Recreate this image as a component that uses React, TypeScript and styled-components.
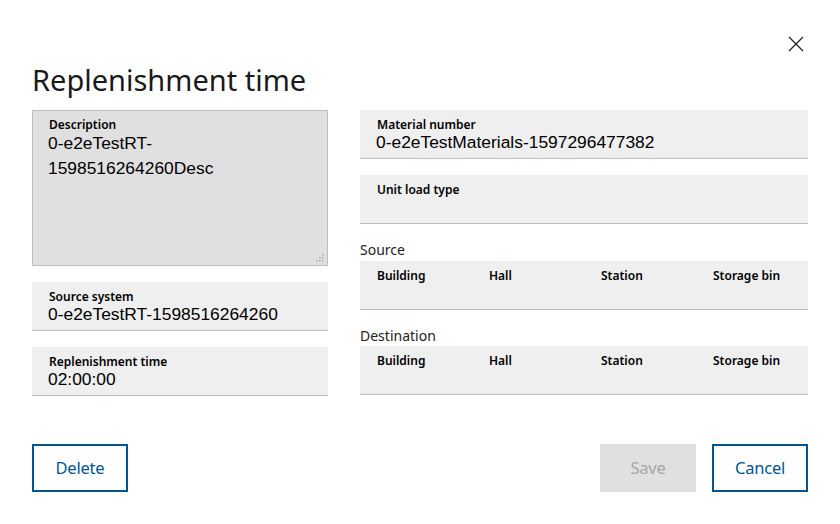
import React from "react";
import styled, { createGlobalStyle } from "styled-components";

const GlobalStyle = createGlobalStyle`
  html, body {
    margin: 0;
    padding: 0;
    background: #ffffff;
  }
  * { box-sizing: border-box; }
`;

const Dialog = styled.div`
  width: 840px;
  height: 524px;
  padding: 32px;
  display: flex;
  flex-direction: column;
  font-family: "Noto Sans", "Liberation Sans", sans-serif;
  color: #000;
  background: #fff;
`;

const HeaderRow = styled.div`
  display: flex;
  justify-content: flex-end;
  height: 24px;
`;

const CloseButton = styled.button`
  width: 24px;
  height: 24px;
  padding: 0;
  border: none;
  background: transparent;
  display: flex;
  align-items: center;
  justify-content: center;
  cursor: pointer;
`;

const Title = styled.h1`
  margin: 6px 0 12px;
  font-size: 29px;
  line-height: 36px;
  font-weight: 400;
  color: #1a1a1a;
`;

const Form = styled.div`
  display: grid;
  grid-template-columns: 296px 448px;
  column-gap: 32px;
  align-items: start;
`;

const Column = styled.div`
  display: flex;
  flex-direction: column;
  gap: 16px;
`;

const Field = styled.div`
  background: #efefef;
  border-bottom: 1px solid #bdbdbd;
  padding: 7px 16px 6px;
  height: 49px;
`;

const AreaField = styled.div`
  position: relative;
  background: #e0e0e0;
  border: 1px solid #bdbdbd;
  padding: 6px 15px 5px;
  height: 156px;
`;

const Label = styled.div`
  font-size: 12px;
  line-height: 16px;
  font-weight: 600;
  color: #000;
  white-space: nowrap;
  padding-left: 1px;
`;

const Value = styled.div`
  font-family: "Liberation Sans", Arial, sans-serif;
  font-size: 17.4px;
  line-height: 20px;
  margin-top: -1px;
  color: #000;
  white-space: nowrap;
`;

const AreaValue = styled.div`
  font-family: "Liberation Sans", Arial, sans-serif;
  font-size: 17.4px;
  line-height: 25px;
  margin-top: -2px;
  color: #000;
`;

const Grip = styled.svg`
  position: absolute;
  right: 3px;
  bottom: 3px;
`;

const Section = styled.div`
  display: flex;
  flex-direction: column;
`;

const SectionTitle = styled.div`
  font-size: 14px;
  line-height: 20.5px;
  color: #222;
`;

const LocationBox = styled.div`
  display: grid;
  grid-template-columns: repeat(4, 1fr);
  background: #efefef;
  border-bottom: 1px solid #bdbdbd;
  height: 49px;
`;

const LocationCell = styled.div`
  padding: 7px 16px 6px;
`;

const Footer = styled.div`
  margin-top: auto;
  display: flex;
  align-items: center;
  gap: 16px;
`;

const Spacer = styled.div`
  flex: 1;
`;

const Button = styled.button<{ $disabled?: boolean }>`
  width: 96px;
  height: 48px;
  font-family: "Noto Sans", "Liberation Sans", sans-serif;
  font-size: 16.5px;
  font-weight: 400;
  letter-spacing: -0.2px;
  border: 2px solid ${(p) => (p.$disabled ? "#e0e0e0" : "#005691")};
  background: ${(p) => (p.$disabled ? "#e0e0e0" : "#ffffff")};
  color: ${(p) => (p.$disabled ? "#a6a6a6" : "#005691")};
  cursor: ${(p) => (p.$disabled ? "default" : "pointer")};
  padding: 0 0 2px;
`;

const locationHeaders = ["Building", "Hall", "Station", "Storage bin"];

function Location({ title }: { title: string }) {
  return (
    <Section>
      <SectionTitle>{title}</SectionTitle>
      <LocationBox>
        {locationHeaders.map((h) => (
          <LocationCell key={h}>
            <Label>{h}</Label>
          </LocationCell>
        ))}
      </LocationBox>
    </Section>
  );
}

export default function App() {
  return (
    <>
      <GlobalStyle />
      <Dialog>
        <HeaderRow>
          <CloseButton aria-label="Close">
            <svg width="16" height="16" viewBox="0 0 16 16">
              <path d="M1 1 L15 15 M15 1 L1 15" stroke="#222" strokeWidth="1.3" fill="none" />
            </svg>
          </CloseButton>
        </HeaderRow>
        <Title>Replenishment time</Title>
        <Form>
          <Column>
            <AreaField>
              <Label>Description</Label>
              <AreaValue>
                0-e2eTestRT-
                <br />
                1598516264260Desc
              </AreaValue>
              <Grip width="9" height="9" viewBox="0 0 9 9">
                <g fill="#a8a8a8">
                  <rect x="7" y="1" width="1.5" height="1.5" />
                  <rect x="4" y="4" width="1.5" height="1.5" />
                  <rect x="7" y="4" width="1.5" height="1.5" />
                  <rect x="1" y="7" width="1.5" height="1.5" />
                  <rect x="4" y="7" width="1.5" height="1.5" />
                  <rect x="7" y="7" width="1.5" height="1.5" />
                </g>
              </Grip>
            </AreaField>
            <Field>
              <Label>Source system</Label>
              <Value>0-e2eTestRT-1598516264260</Value>
            </Field>
            <Field>
              <Label>Replenishment time</Label>
              <Value>02:00:00</Value>
            </Field>
          </Column>
          <Column>
            <Field>
              <Label>Material number</Label>
              <Value>0-e2eTestMaterials-1597296477382</Value>
            </Field>
            <Field>
              <Label>Unit load type</Label>
            </Field>
            <Location title="Source" />
            <Location title="Destination" />
          </Column>
        </Form>
        <Footer>
          <Button>Delete</Button>
          <Spacer />
          <Button $disabled disabled>
            Save
          </Button>
          <Button>Cancel</Button>
        </Footer>
      </Dialog>
    </>
  );
}
